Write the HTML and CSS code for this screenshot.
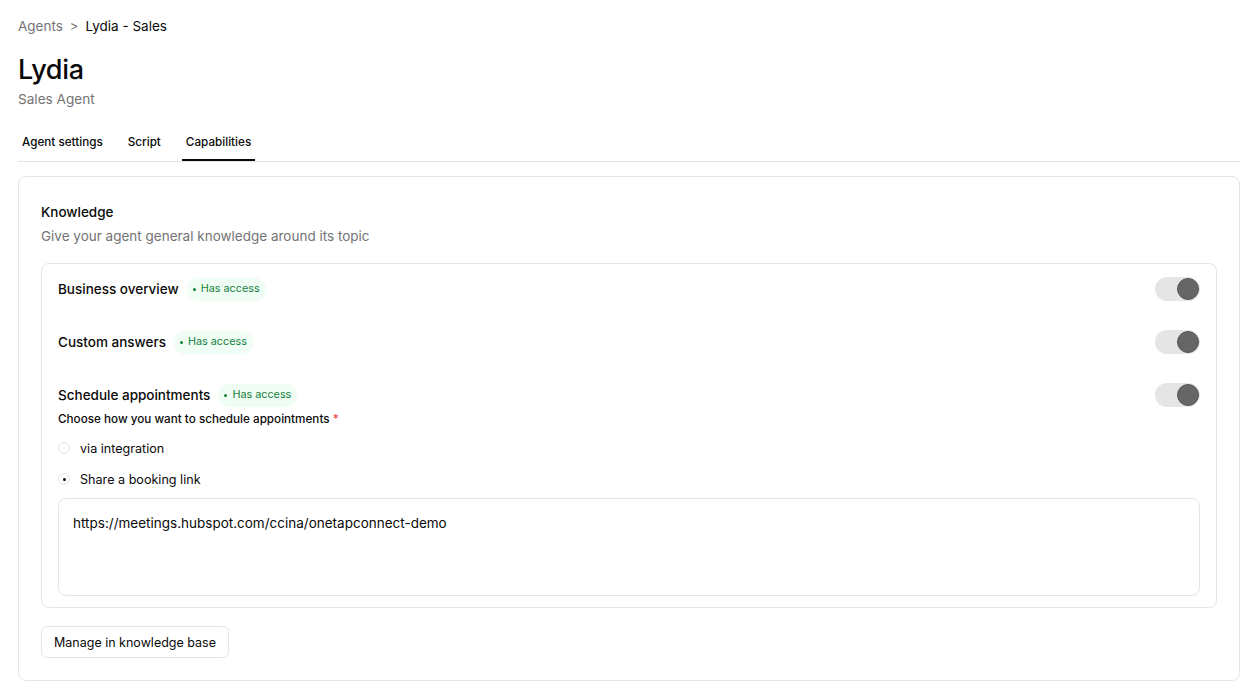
FILE: index.html
```html
<!DOCTYPE html>
<html>
<head>
<meta charset="utf-8">
<link rel="stylesheet" href="styles.css">
</head>
<body>
<div class="page">
  <nav class="crumbs"><span class="crumb-muted">Agents</span><span class="crumb-sep">&gt;</span><span class="crumb-current">Lydia - Sales</span></nav>
  <h1 class="title">Lydia</h1>
  <div class="subtitle">Sales Agent</div>
  <div class="tabs">
    <div class="tab">Agent settings</div>
    <div class="tab">Script</div>
    <div class="tab active">Capabilities</div>
  </div>
  <section class="card">
    <h2 class="card-title">Knowledge</h2>
    <p class="card-desc">Give your agent general knowledge around its topic</p>
    <div class="inner">
      <div class="row">
        <div class="row-head">
          <span class="row-label">Business overview</span>
          <span class="badge"><span class="dot"></span>Has access</span>
        </div>
        <div class="toggle"><div class="knob"></div></div>
      </div>
      <div class="row">
        <div class="row-head">
          <span class="row-label">Custom answers</span>
          <span class="badge"><span class="dot"></span>Has access</span>
        </div>
        <div class="toggle"><div class="knob"></div></div>
      </div>
      <div class="row row-last">
        <div class="row-head">
          <span class="row-label">Schedule appointments</span>
          <span class="badge"><span class="dot"></span>Has access</span>
        </div>
        <div class="toggle"><div class="knob"></div></div>
      </div>
      <div class="choose">Choose how you want to schedule appointments <span class="req">*</span></div>
      <div class="radio-row"><span class="radio"></span><span class="radio-label">via integration</span></div>
      <div class="radio-row"><span class="radio checked"></span><span class="radio-label">Share a booking link</span></div>
      <div class="textarea">https://meetings.hubspot.com/ccina/onetapconnect-demo</div>
    </div>
    <button class="btn">Manage in knowledge base</button>
  </section>
</div>
</body>
</html>
```
FILE: styles.css
```css
* { box-sizing: border-box; }
html, body { margin: 0; padding: 0; background: #fff; }
body {
  font-family: Inter, "Noto Sans", sans-serif;
  color: #0a0a0a;
}
.page {
  padding: 16px 12px 0 18px;
}
.crumbs {
  display: flex;
  align-items: center;
  font-size: 13.5px;
  line-height: 20px;
  height: 20px;
}
.crumb-muted { color: #737373; }
.crumb-sep { color: #737373; margin: 0 7px 0 7px; font-size: 13px; }
.crumb-current { color: #0a0a0a; }
.title {
  margin: 18px 0 0 0;
  font-size: 27px;
  font-weight: 500;
  line-height: 32px;
  letter-spacing: -0.3px;
}
.subtitle {
  color: #737373;
  font-size: 13.6px;
  line-height: 20px;
  margin-top: 3px;
}
.tabs {
  display: flex;
  margin-top: 21px;
  border-bottom: 1px solid #e5e5e5;
  height: 32px;
}
.tab {
  font-size: 11.7px;
  font-weight: 500;
  padding: 0 4px;
  line-height: 16px;
  margin-right: 17px;
  padding-top: 4px;
  height: 31px;
}
.tab.active {
  border-bottom: 2px solid #0a0a0a;
}
.card {
  margin-top: 14px;
  border: 1px solid #e5e5e5;
  border-radius: 8px;
  padding: 26px 22px 22px 22px;
  width: 1222px;
}
.card-title {
  margin: 0;
  font-size: 13.5px;
  font-weight: 500;
  line-height: 18px;
}
.card-desc {
  margin: 6px 0 0 0;
  font-size: 13.5px;
  line-height: 18px;
  color: #737373;
}
.inner {
  margin-top: 18px;
  border: 1px solid #e5e5e5;
  border-radius: 8px;
  padding: 13px 16px 11px 16px;
}
.row {
  display: flex;
  justify-content: space-between;
  align-items: center;
  height: 24px;
  margin-bottom: 29px;
}
.row-last { margin-bottom: 0; }
.row-head { display: flex; align-items: center; }
.row-label { font-size: 13.5px; font-weight: 500; }
.badge {
  display: inline-flex;
  align-items: center;
  margin-left: 8px;
  height: 23px;
  padding: 0 6px;
  border-radius: 12px;
  background: #f0fdf4;
  color: #15803d;
  font-size: 10.8px;
  line-height: 14px;
}
.dot {
  width: 3px; height: 3px;
  border-radius: 50%;
  background: #15803d;
  margin-right: 5px;
}
.toggle {
  width: 45px;
  height: 24px;
  border-radius: 12px;
  background: #e5e5e5;
  position: relative;
}
.knob {
  position: absolute;
  right: 1px; top: 1px;
  width: 22px; height: 22px;
  border-radius: 50%;
  background: #666;
  border: 1px solid #555;
}
.choose {
  margin-top: 4px;
  font-size: 11.7px;
  font-weight: 500;
  line-height: 16px;
}
.req { color: #ef4444; }
.radio-row {
  display: flex;
  align-items: center;
  height: 20px;
  margin-top: 11px;
}
.radio-row + .radio-row { margin-top: 11px; }
.radio {
  width: 12px; height: 12px;
  border-radius: 50%;
  border: 1px solid #e5e5e5;
  margin-right: 10px;
  display: flex;
  align-items: center;
  justify-content: center;
}
.radio.checked::after {
  content: "";
  width: 3px; height: 3px;
  border-radius: 50%;
  background: #0a0a0a;
}
.radio-label { font-size: 12.6px; }
.textarea {
  margin-top: 9px;
  border: 1px solid #e5e5e5;
  border-radius: 8px;
  height: 98px;
  padding: 16px 14px;
  font-size: 13.5px;
  line-height: 17px;
}
.btn {
  margin-top: 18px;
  font-family: inherit;
  font-size: 12.5px;
  color: #0a0a0a;
  background: #fff;
  border: 1px solid #e5e5e5;
  border-radius: 6px;
  height: 32px;
  padding: 0 12px;
  display: block;
}
```
